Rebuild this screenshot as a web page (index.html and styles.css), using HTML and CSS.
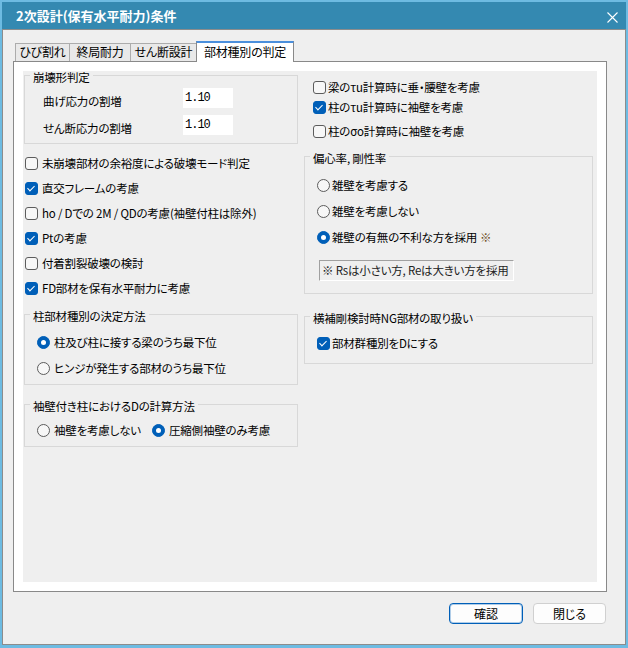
FILE: index.html
```html
<!DOCTYPE html>
<html lang="ja">
<head>
    <meta charset="UTF-8">
    <meta name="viewport" content="width=device-width, initial-scale=1.0">
    <title>2次設計(保有水平耐力)条件</title>
    <link rel="stylesheet" href="styles.css">
</head>
<body>
    <div class="window">
        <div class="titlebar">
            <span class="title">2次設計(保有水平耐力)条件</span>
            <svg class="close" width="11" height="11" viewBox="0 0 11 11">
                <path d="M0.5 0.5 L10.5 10.5 M10.5 0.5 L0.5 10.5" stroke="#fff" stroke-width="1.1" fill="none"/>
            </svg>
        </div>

        <div class="frame">
            <div class="tabs">
                <div class="tab tab-1">ひび割れ</div>
                <div class="tab tab-2">終局耐力</div>
                <div class="tab tab-3">せん断設計</div>
                <div class="tab tab-4 active">部材種別の判定</div>
            </div>

            <div class="tab-panel">
                <div class="tab-content">
                    <!-- 左側 -->
                    <div class="col">
                        <fieldset class="group first">
                            <legend>崩壊形判定</legend>
                            <div class="group-body factors">
                                <span>曲げ応力の割増</span>
                                <input class="factor" type="text" value="1.10">
                                <span>せん断応力の割増</span>
                                <input class="factor" type="text" value="1.10">
                            </div>
                        </fieldset>

                        <div class="check-list left">
                            <label class="check"><span class="box"></span>未崩壊部材の余裕度による破壊モード判定</label>
                            <label class="check"><span class="box checked"></span>直交フレームの考慮</label>
                            <label class="check"><span class="box"></span>ho / Dでの 2M / QDの考慮(袖壁付柱は除外)</label>
                            <label class="check"><span class="box checked"></span>Ptの考慮</label>
                            <label class="check"><span class="box"></span>付着割裂破壊の検討</label>
                            <label class="check"><span class="box checked"></span>FD部材を保有水平耐力に考慮</label>
                        </div>

                        <fieldset class="group column-kind">
                            <legend>柱部材種別の決定方法</legend>
                            <div class="group-body radio-list">
                                <label class="radio"><span class="dot checked"></span>柱及び柱に接する梁のうち最下位</label>
                                <label class="radio"><span class="dot"></span>ヒンジが発生する部材のうち最下位</label>
                            </div>
                        </fieldset>

                        <fieldset class="group wing-wall">
                            <legend>袖壁付き柱におけるDの計算方法</legend>
                            <div class="group-body radio-row">
                                <label class="radio wide"><span class="dot"></span>袖壁を考慮しない</label>
                                <label class="radio"><span class="dot checked"></span>圧縮側袖壁のみ考慮</label>
                            </div>
                        </fieldset>
                    </div>

                    <!-- 右側 -->
                    <div class="col">
                        <div class="check-list right">
                            <label class="check tight"><span class="box"></span>梁のτu計算時に垂・腰壁を考慮</label>
                            <label class="check tight"><span class="box checked"></span>柱のτu計算時に袖壁を考慮</label>
                            <label class="check tight spaced"><span class="box"></span>柱のσo計算時に袖壁を考慮</label>
                        </div>

                        <fieldset class="group eccentric">
                            <legend>偏心率, 剛性率</legend>
                            <div class="group-body">
                                <div class="radio-list">
                                    <label class="radio tight"><span class="dot"></span>雑壁を考慮する</label>
                                    <label class="radio tight"><span class="dot"></span>雑壁を考慮しない</label>
                                    <label class="radio tight"><span class="dot checked"></span>雑壁の有無の不利な方を採用<span class="mark">※</span></label>
                                </div>
                                <div class="note">※ Rsは小さい方, Reは大きい方を採用</div>
                            </div>
                        </fieldset>

                        <fieldset class="group bracing">
                            <legend>横補剛検討時NG部材の取り扱い</legend>
                            <div class="group-body">
                                <label class="check tight"><span class="box checked"></span>部材群種別をDにする</label>
                            </div>
                        </fieldset>
                    </div>
                </div>
            </div>

            <div class="footer">
                <button class="btn primary">確認</button>
                <button class="btn">閉じる</button>
            </div>
        </div>
    </div>
</body>
</html>
```

FILE: styles.css
```css
* {
    box-sizing: border-box;
}

body {
    margin: 0;
    font-family: "Noto Sans CJK JP", "Noto Sans", sans-serif;
    font-size: 11.5px;
    letter-spacing: -0.2px;
    font-feature-settings: "palt";
    color: #000;
    background-color: #efefef;
}

.window {
    width: 628px;
    height: 648px;
    border: 2px solid #6dbbe2;
    border-bottom-width: 3px;
    background-color: #efefef;
}

.titlebar {
    height: 27px;
    display: flex;
    align-items: center;
    justify-content: space-between;
    padding-left: 14px;
    background-color: #3489b1;
    color: #fff;
}

.title {
    font-size: 13px;
    font-weight: bold;
    letter-spacing: 0;
    line-height: 16px;
}

.close {
    margin: 3px 8px 0 0;
}

.frame {
    height: 616px;
    border: 1px solid #8c8c8c;
    padding: 0 18px 0 10px;
}

/* タブ */
.tabs {
    height: 31px;
    display: flex;
    align-items: flex-end;
    padding-left: 2px;
}

.tab {
    height: 18px;
    line-height: 16px;
    text-align: center;
    font-size: 12px;
    background-color: #e9e9e9;
    border: 1px solid #acacac;
    border-bottom: none;
}

.tab + .tab {
    margin-left: -1px;
}

.tab-1 { width: 55px; }
.tab-2 { width: 62px; }
.tab-3 { width: 67px; }
.tab-4 { width: 98px; }

.tab.active {
    position: relative;
    z-index: 1;
    height: 21px;
    line-height: 18px;
    margin-bottom: -1px;
    background-color: #fff;
    border-color: #898989;
    border-top: 2px solid #4b8fdc;
}

.tab-panel {
    height: 531px;
    border: 1px solid #898989;
    background-color: #fff;
    padding: 9px;
}

.tab-content {
    height: 511px;
    background-color: #efefef;
    display: grid;
    grid-template-columns: 274px 289px;
    column-gap: 6px;
    align-items: start;
    padding-left: 1px;
}

/* グループ枠 */
.group {
    margin: 0;
    padding: 0;
    min-width: 0;
    border: 1px solid #d8d8d8;
}

.group legend {
    margin-left: 5px;
    padding: 4px 3px 0;
    line-height: 14px;
}

.group-body {
    padding: 8px 0 8px 12px;
}

.group.first {
    margin-top: -5px;
}

.factors {
    display: grid;
    grid-template-columns: 140px 50px;
    row-gap: 7px;
    align-items: center;
    padding: 4px 0 8px 18px;
}

.factors span {
    height: 20px;
    line-height: 20px;
    padding-top: 3px;
}

.factor {
    width: 50px;
    height: 20px;
    border: none;
    padding: 0 0 0 2px;
    background-color: #fff;
    font-family: "Liberation Mono", monospace;
    font-size: 12px;
    letter-spacing: -1px;
    color: #000;
}

/* チェック・ラジオ */
.check-list {
    display: flex;
    flex-direction: column;
}

.check-list.left {
    margin-top: 9px;
    gap: 5px;
}

.check-list.right {
    padding-top: 6px;
}

.check,
.radio {
    height: 20px;
    display: flex;
    align-items: center;
    gap: 4px;
    white-space: nowrap;
}

.check-list.left .check {
    padding-left: 1px;
}

.check-list.right .check {
    padding-left: 9px;
}

.check.tight,
.radio.tight {
    gap: 2px;
}

.check.spaced {
    margin-top: 4px;
}

.box,
.dot {
    flex: none;
    width: 13px;
    height: 13px;
    border: 1px solid #5c5c5c;
    background-color: #f7f7f7;
    position: relative;
}

.box {
    border-radius: 3px;
}

.dot {
    border-radius: 50%;
}

.box.checked {
    background-color: #005fb8;
    border-color: #005fb8;
}

.box.checked::after {
    content: "";
    position: absolute;
    left: 3px;
    top: 1px;
    width: 3px;
    height: 6px;
    border-right: 1.5px solid #fff;
    border-bottom: 1.5px solid #fff;
    transform: rotate(45deg);
}

.dot.checked {
    background-color: #005fb8;
    border-color: #005fb8;
}

.dot.checked::after {
    content: "";
    position: absolute;
    left: 3px;
    top: 3px;
    width: 5px;
    height: 5px;
    border-radius: 50%;
    background-color: #fff;
}

.radio-list {
    display: flex;
    flex-direction: column;
}

.column-kind {
    margin-top: 7px;
}

.column-kind .group-body {
    padding: 9px 0 6px 12px;
}

.column-kind .radio-list {
    gap: 6px;
}

.wing-wall {
    margin-top: 10px;
}

.wing-wall .group-body {
    padding: 7px 0 6px 12px;
}

.radio-row {
    display: flex;
}

.radio.wide {
    width: 115px;
}

.eccentric {
    margin-top: 6px;
}

.eccentric .group-body {
    padding: 10px 0 12px 12px;
}

.eccentric .radio-list {
    gap: 6px;
}

.mark {
    margin-left: 1px;
    color: #6b4a1c;
}

.note {
    width: 195px;
    height: 21px;
    margin: 13px 0 0 2px;
    padding-left: 2px;
    line-height: 19px;
    white-space: nowrap;
    overflow: hidden;
    border: 1px solid;
    border-color: #a0a0a0 #fff #fff #a0a0a0;
    color: #222;
}

.bracing {
    margin-top: 13px;
}

.bracing .group-body {
    padding: 8px 0 10px 12px;
}

/* ボタン */
.footer {
    display: flex;
    justify-content: flex-end;
    gap: 10px;
    margin: 11px 1px 0 0;
}

.btn {
    width: 73px;
    height: 21px;
    padding: 0;
    font-family: inherit;
    font-size: 12px;
    font-feature-settings: "palt";
    color: #000;
    background-color: #fdfdfd;
    border: 1px solid #d0d0d0;
    border-radius: 4px;
}

.btn.primary {
    width: 74px;
    border-color: #005fb8;
    box-shadow: inset 0 0 0 1px rgba(0, 95, 184, 0.3);
}
```
